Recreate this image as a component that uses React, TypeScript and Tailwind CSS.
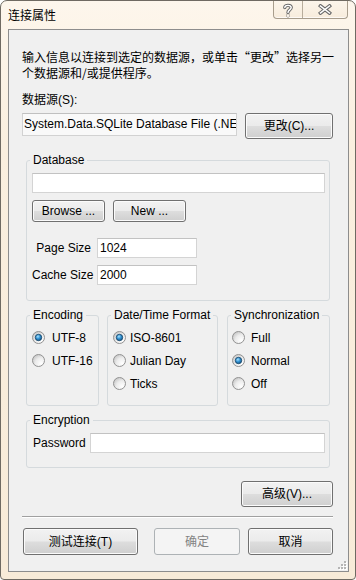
import React from "react";

function Btn({
  children,
  className = "",
  disabled = false,
}: {
  children: React.ReactNode;
  className?: string;
  disabled?: boolean;
}) {
  return (
    <div
      className={
        disabled
          ? `flex items-center justify-center whitespace-nowrap rounded-[3px] border border-[#adb2b5] bg-[#f4f4f4] text-[#838383] leading-[16px] ${className}`
          : `flex items-center justify-center whitespace-nowrap rounded-[3px] border border-[#707070] bg-[linear-gradient(180deg,#f2f2f2_0%,#ebebeb_48%,#dddddd_52%,#cfcfcf_100%)] shadow-[inset_0_0_0_1px_#fbfbfb] text-black leading-[16px] ${className}`
      }
    >
      {children}
    </div>
  );
}

function TextBox({ value = "", className = "" }: { value?: string; className?: string }) {
  return (
    <div
      className={`flex items-center overflow-hidden whitespace-nowrap border border-[#d4d4d4] border-t-[#c2c2c2] bg-white pl-[2px] leading-[16px] ${className}`}
    >
      {value}
    </div>
  );
}

function Group({
  label,
  className = "",
  children,
}: {
  label: string;
  className?: string;
  children: React.ReactNode;
}) {
  return (
    <fieldset className={`rounded-[3px] border border-[#d5dadd] ${className}`}>
      <legend className="ml-[3px] whitespace-nowrap px-[3px] leading-[16px]">{label}</legend>
      {children}
    </fieldset>
  );
}

function RadioIcon({ checked }: { checked: boolean }) {
  return (
    <svg width="13" height="13" viewBox="0 0 13 13" className="shrink-0">
      <defs>
        <radialGradient id="rOff" cx="0.72" cy="0.75" r="0.85">
          <stop offset="0" stopColor="#ffffff" />
          <stop offset="0.55" stopColor="#ececec" />
          <stop offset="1" stopColor="#c4c4c4" />
        </radialGradient>
        <radialGradient id="rOn" cx="0.4" cy="0.35" r="0.75">
          <stop offset="0" stopColor="#a6e3ff" />
          <stop offset="0.45" stopColor="#3393d4" />
          <stop offset="1" stopColor="#0c4a78" />
        </radialGradient>
      </defs>
      <circle cx="6.5" cy="6.5" r="6" fill="url(#rOff)" stroke="#929292" strokeWidth="1" />
      {checked && (
        <circle cx="6.5" cy="6.5" r="3.2" fill="url(#rOn)" stroke="#1b4a6d" strokeWidth="0.9" />
      )}
    </svg>
  );
}

function Radio({
  checked = false,
  label,
  gap,
}: {
  checked?: boolean;
  label: string;
  gap: "g7" | "g4" | "g6";
}) {
  const gapClass = gap === "g7" ? "gap-[7px]" : gap === "g4" ? "gap-[4px]" : "gap-[6px]";
  return (
    <div className={`flex h-[23px] items-center whitespace-nowrap ${gapClass}`}>
      <RadioIcon checked={checked} />
      <span className="leading-[16px]">{label}</span>
    </div>
  );
}

function HelpIcon() {
  return (
    <svg width="12" height="15" viewBox="0 0 12 15">
      <g fill="none" strokeLinecap="round" strokeLinejoin="round">
        <path d="M2.8 4.6 C2.8 1.6 9.2 1.6 9.2 4.6 C9.2 6.8 6 7 6 9.4" stroke="#6a6a6a" strokeWidth="3.4" />
        <circle cx="6" cy="12.6" r="0.2" stroke="#6a6a6a" strokeWidth="3.4" />
        <path d="M2.8 4.6 C2.8 1.6 9.2 1.6 9.2 4.6 C9.2 6.8 6 7 6 9.4" stroke="#ffffff" strokeWidth="1.4" />
        <circle cx="6" cy="12.6" r="0.2" stroke="#ffffff" strokeWidth="1.4" />
      </g>
    </svg>
  );
}

function CloseIcon() {
  return (
    <svg width="14" height="11" viewBox="0 0 14 11">
      <g fill="none" strokeLinecap="square">
        <path d="M2.5 2 L11.5 9 M11.5 2 L2.5 9" stroke="#6a6a6a" strokeWidth="3.6" />
        <path d="M2.5 2 L11.5 9 M11.5 2 L2.5 9" stroke="#ffffff" strokeWidth="1.5" />
      </g>
    </svg>
  );
}

function Grip() {
  const dots = [
    [6, 0],
    [3, 3],
    [6, 3],
    [0, 6],
    [3, 6],
    [6, 6],
  ];
  return (
    <svg width="9" height="9" viewBox="0 0 9 9">
      {dots.map(([x, y], i) => (
        <g key={i}>
          <rect x={x + 1} y={y + 1} width="2" height="2" fill="#ffffff" />
          <rect x={x} y={y} width="2" height="2" fill="#b5b5b5" />
        </g>
      ))}
    </svg>
  );
}

export default function App() {
  return (
    <div className="flex h-[580px] w-[356px] flex-col overflow-hidden rounded-t-[7px] rounded-b-[4px] border border-[#6f6a62] bg-[linear-gradient(180deg,#fdf6ec_0%,#faefdf_25%,#f8ebd8_100%)] font-['Liberation_Sans','Noto_Sans_CJK_SC',sans-serif] text-[12px] text-black">
      {/* title bar */}
      <div className="flex h-[28px] items-start">
        <div className="ml-[7px] mt-[7px] leading-[16px]">连接属性</div>
        <div className="ml-auto mr-[7px] flex h-[18px] overflow-hidden rounded-b-[4px] border-x border-b border-[#a89d8c] bg-[linear-gradient(180deg,#fcf5eb_0%,#f7ecdc_100%)] shadow-[inset_0_-1px_0_rgba(255,255,255,0.7)]">
          <div className="flex w-[28px] items-center justify-center pt-px">
            <HelpIcon />
          </div>
          <div className="flex w-[45px] items-center justify-center border-l border-[#b8ad9c]">
            <CloseIcon />
          </div>
        </div>
      </div>

      {/* client area */}
      <div className="relative ml-[7px] mr-[6px] flex h-[543px] flex-col border border-[#8d8d8d] bg-[#f0f0f0] pl-[13px] pr-[15px]">
        <p className="mt-[19px] whitespace-nowrap font-['Noto_Sans_CJK_SC',sans-serif] leading-[16px]">
          输入信息以连接到选定的数据源，或单击“更改”选择另一
          <br />
          个数据源和/或提供程序。
        </p>
        <div className="mt-[11px] leading-[16px]">数据源(S):</div>
        <div className="mt-[5px] flex items-start gap-[8px]">
          <div className="h-[23px] w-[215px] shrink-0 overflow-hidden border border-[#d2d2d2] border-t-[#c0c0c0] bg-[#f9f9f9]">
            <div className="whitespace-nowrap pl-[1px] pt-[2px] leading-[17px]">
              System.Data.SQLite Database File (.NET Framework Data Provider for SQLite)
            </div>
          </div>
          <Btn className="h-[26px] w-[88px]">更改(C)...</Btn>
        </div>

        <Group label="Database" className="mt-[13px] ml-[4px] mr-[3px]">
          <div className="flex flex-col pl-[5px] pr-[4px] pt-[5px] pb-[15px]">
            <TextBox className="h-[20px] w-full" />
            <div className="mt-[7px] flex gap-[8px]">
              <Btn className="h-[22px] w-[73px]">Browse ...</Btn>
              <Btn className="h-[22px] w-[73px]">New ...</Btn>
            </div>
            <div className="mt-[16px] flex items-center">
              <div className="w-[59px] whitespace-nowrap text-right leading-[16px]">Page Size</div>
              <TextBox value="1024" className="ml-[6px] h-[20px] w-[100px]" />
            </div>
            <div className="mt-[7px] flex items-center">
              <div className="w-[59px] whitespace-nowrap text-right leading-[16px]">Cache Size</div>
              <TextBox value="2000" className="ml-[6px] h-[20px] w-[100px]" />
            </div>
          </div>
        </Group>

        <div className="mt-[6px] ml-[4px] mr-[3px] flex">
          <Group label="Encoding" className="w-[73px]">
            <div className="pl-[5px] pt-[3px] pb-[10px]">
              <Radio checked label="UTF-8" gap="g7" />
              <Radio label="UTF-16" gap="g7" />
            </div>
          </Group>
          <Group label="Date/Time Format" className="ml-[8px] w-[111px]">
            <div className="pl-[5px] pt-[3px] pb-[10px]">
              <Radio checked label="ISO-8601" gap="g4" />
              <Radio label="Julian Day" gap="g4" />
              <Radio label="Ticks" gap="g4" />
            </div>
          </Group>
          <Group label="Synchronization" className="ml-[9px] flex-1">
            <div className="pl-[4px] pt-[3px] pb-[10px]">
              <Radio label="Full" gap="g6" />
              <Radio checked label="Normal" gap="g6" />
              <Radio label="Off" gap="g6" />
            </div>
          </Group>
        </div>

        <Group label="Encryption" className="mt-[6px] ml-[4px] mr-[3px]">
          <div className="flex items-center pl-[6px] pr-[4px] pt-[5px] pb-[14px]">
            <div className="w-[57px] whitespace-nowrap leading-[16px]">Password</div>
            <TextBox className="h-[20px] flex-1" />
          </div>
        </Group>

        <Btn className="mt-[13px] h-[26px] w-[92px] self-end">高级(V)...</Btn>

        <div className="mt-[9px] h-[2px] border-t border-b border-t-[#a0a0a0] border-b-white" />

        <div className="mt-[10px] flex">
          <Btn className="ml-[1px] h-[27px] w-[115px]">测试连接(T)</Btn>
          <Btn disabled className="ml-[16px] h-[27px] w-[86px]">
            确定
          </Btn>
          <Btn className="ml-auto h-[27px] w-[85px]">取消</Btn>
        </div>

        <div className="absolute right-[1px] bottom-[1px]">
          <Grip />
        </div>
      </div>
    </div>
  );
}
